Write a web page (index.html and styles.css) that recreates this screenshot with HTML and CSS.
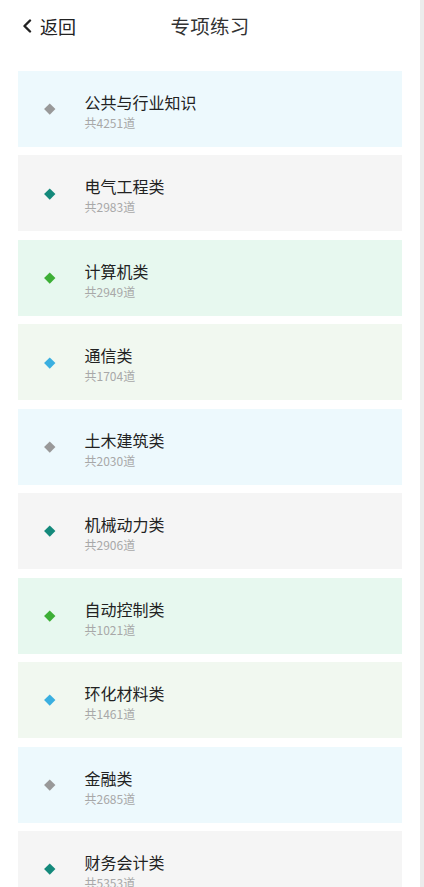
FILE: index.html
```html
<!DOCTYPE html>
<html lang="zh-CN">
<head>
<meta charset="utf-8">
<title>专项练习</title>
<link rel="stylesheet" href="styles.css">
</head>
<body>
<div class="page">
  <header class="header">
    <div class="back">
      <svg class="chev" width="10" height="14" viewBox="0 0 10 14"><path d="M8 1.5 L2.5 7 L8 12.5" fill="none" stroke="#222" stroke-width="2.4" stroke-linecap="round" stroke-linejoin="round"/></svg>
      <span class="back-text">返回</span>
    </div>
    <div class="title">专项练习</div>
    <div></div>
  </header>
  <main class="list">
    <div class="card c1"><i class="dot"></i><div class="txt"><div class="name">公共与行业知识</div><div class="count">共4251道</div></div></div>
    <div class="card c2"><i class="dot"></i><div class="txt"><div class="name">电气工程类</div><div class="count">共2983道</div></div></div>
    <div class="card c3"><i class="dot"></i><div class="txt"><div class="name">计算机类</div><div class="count">共2949道</div></div></div>
    <div class="card c4"><i class="dot"></i><div class="txt"><div class="name">通信类</div><div class="count">共1704道</div></div></div>
    <div class="card c1"><i class="dot"></i><div class="txt"><div class="name">土木建筑类</div><div class="count">共2030道</div></div></div>
    <div class="card c2"><i class="dot"></i><div class="txt"><div class="name">机械动力类</div><div class="count">共2906道</div></div></div>
    <div class="card c3"><i class="dot"></i><div class="txt"><div class="name">自动控制类</div><div class="count">共1021道</div></div></div>
    <div class="card c4"><i class="dot"></i><div class="txt"><div class="name">环化材料类</div><div class="count">共1461道</div></div></div>
    <div class="card c1"><i class="dot"></i><div class="txt"><div class="name">金融类</div><div class="count">共2685道</div></div></div>
    <div class="card c2"><i class="dot"></i><div class="txt"><div class="name">财务会计类</div><div class="count">共5353道</div></div></div>
  </main>
</div>
<div class="scrollbar"></div>
</body>
</html>
```

FILE: styles.css
```css
html, body {
  margin: 0;
  padding: 0;
  height: 887px;
  overflow: hidden;
  background: #ffffff;
}
body {
  display: flex;
  font-family: "Noto Sans CJK SC", "Noto Sans", sans-serif;
  color: #222;
}
.page {
  width: 420px;
  height: 887px;
  overflow: hidden;
}
.scrollbar {
  width: 4px;
  height: 887px;
  background: #ececec;
}
.header {
  height: 52px;
  display: grid;
  grid-template-columns: 1fr auto 1fr;
  align-items: center;
  padding-left: 22px;
  padding-right: 22px;
}
.back {
  display: flex;
  align-items: center;
  gap: 8px;
}
.chev {
  display: block;
}
.back-text {
  font-size: 18px;
  line-height: 24px;
  color: #222;
}
.title {
  font-size: 19.5px;
  line-height: 26px;
  color: #333;
  letter-spacing: 0.3px;
}
.list {
  padding: 19px 18px 0 18px;
  display: flex;
  flex-direction: column;
  gap: 8.44px;
}
.card {
  height: 76px;
  flex-shrink: 0;
  display: flex;
  align-items: center;
  padding-left: 28px;
}
.dot {
  width: 7.5px;
  height: 7.5px;
  transform: rotate(45deg);
  display: block;
  flex-shrink: 0;
}
.txt {
  margin-left: 31px;
  margin-top: 4px;
}
.name {
  font-size: 16px;
  line-height: 24px;
  color: #222;
}
.count {
  font-size: 12px;
  line-height: 18px;
  color: #a8a8a8;
}
.c1 { background: #edf9fd; }
.c2 { background: #f5f5f5; }
.c3 { background: #e7f8ef; }
.c4 { background: #f1f8f0; }
.c1 .dot { background: #999999; }
.c2 .dot { background: #14897b; }
.c3 .dot { background: #3daf36; }
.c4 .dot { background: #3aafe0; }
```
